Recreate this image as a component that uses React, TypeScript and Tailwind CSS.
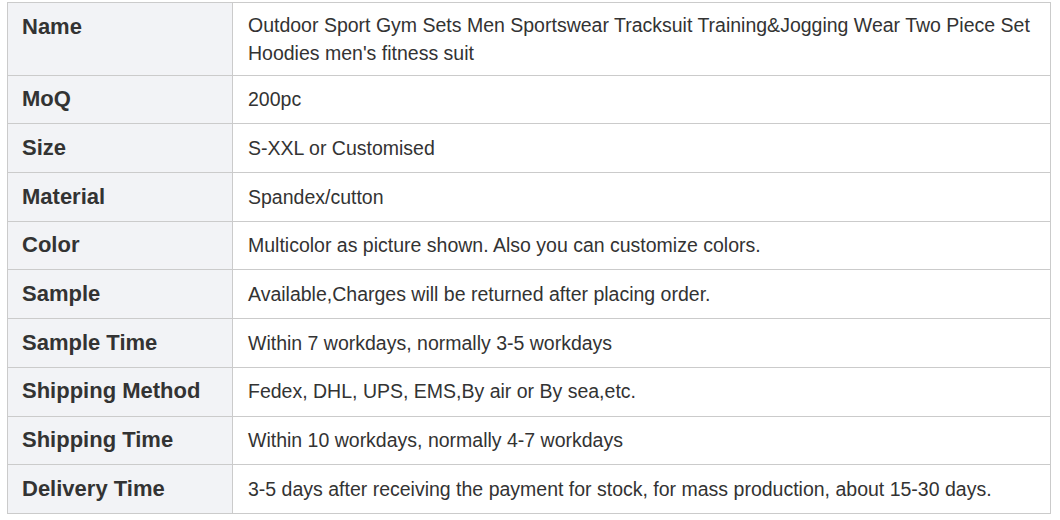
const rows: [string, string][] = [
  [
    "Name",
    "Outdoor Sport Gym Sets Men Sportswear Tracksuit Training&Jogging Wear Two Piece Set Hoodies men's fitness suit",
  ],
  ["MoQ", "200pc"],
  ["Size", "S-XXL or Customised"],
  ["Material", "Spandex/cutton"],
  ["Color", "Multicolor as picture shown. Also you can customize colors."],
  ["Sample", "Available,Charges will be returned after placing order."],
  ["Sample Time", "Within 7 workdays, normally 3-5 workdays"],
  ["Shipping Method", "Fedex, DHL, UPS, EMS,By air or By sea,etc."],
  ["Shipping Time", "Within 10 workdays, normally 4-7 workdays"],
  [
    "Delivery Time",
    "3-5 days after receiving the payment for stock, for mass production, about 15-30 days.",
  ],
];

export default function App() {
  return (
    <div
      className="w-[1060px] h-[520px] bg-white pl-[7px] pt-[2px] text-[#333]"
      style={{ fontFamily: '"Liberation Sans", Arial, sans-serif' }}
    >
      <table className="w-[1044px] border-collapse table-fixed border border-[#cbcbcb]">
        <colgroup>
          <col className="w-[225px]" />
          <col />
        </colgroup>
        <tbody>
          {rows.map(([label, value], i) => (
            <tr key={label} className={i === 0 ? "align-top" : "align-baseline"}>
              <td className="border border-[#cbcbcb] bg-[#f2f3f6] px-[14px] py-[7.5px] text-[22px] leading-[32.7px] font-bold">
                {label}
              </td>
              <td className="border border-[#cbcbcb] px-[15px] py-[7.5px] text-[19.5px] leading-[28.3px]">
                {value}
              </td>
            </tr>
          ))}
        </tbody>
      </table>
    </div>
  );
}
